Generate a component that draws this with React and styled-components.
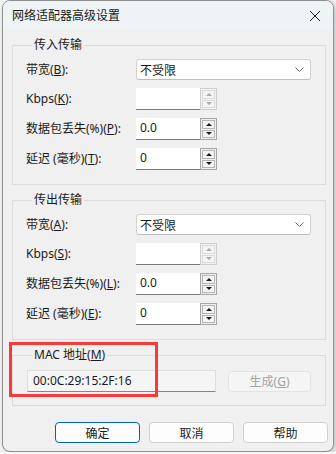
import React from 'react'
import styled, { createGlobalStyle } from 'styled-components'

const Global = createGlobalStyle`
    html, body {
        margin: 0;
        padding: 0;
        background: #f7f7f7;
    }
    body {
        font-family: "Noto Sans", "Noto Sans CJK SC", sans-serif;
        font-size: 12px;
        color: #1a1a1a;
    }
`

const Window = styled.div`
    width: 332px;
    height: 452px;
    margin-left: 2px;
    box-sizing: border-box;
    border: 1px solid #8f8f8f;
    border-radius: 8px;
    background: #f0f0f0;
    overflow: hidden;
    box-shadow: 2px 2px 6px rgba(0, 0, 0, 0.25);
    display: flex;
    flex-direction: column;
`

const TitleBar = styled.div`
    height: 29px;
    flex-shrink: 0;
    background: #eef4f6;
    display: flex;
    align-items: center;
    justify-content: space-between;
    padding: 0 9px 0 9px;
`

const Title = styled.span`
    font-size: 12px;
    line-height: 16px;
    color: #1a1a1a;
`

const Close = styled.div`
    width: 12px;
    height: 12px;
    display: flex;
    margin-right: 3px;
`

const Body = styled.div`
    flex: 1;
    display: flex;
    flex-direction: column;
    gap: 7px;
    padding: 7px 7px 0 9px;
`

const Group = styled.fieldset`
    margin: 0;
    border: 1px solid #dcdcdc;
    padding: ${p => p.$pt || 6}px 14px ${p => p.$pb || 14}px 13px;
    min-width: 0;
`

const Legend = styled.legend`
    padding: 0 2px;
    margin-left: 6px;
    height: 16px;
    line-height: 16px;
    font-size: 12px;
`

const Rows = styled.div`
    display: grid;
    grid-template-columns: 110px 1fr;
    row-gap: 8px;
    align-items: center;
`

const Label = styled.span`
    font-size: 12px;
    line-height: 16px;
    white-space: nowrap;
`

const Combo = styled.div`
    height: 21px;
    box-sizing: border-box;
    background: #fff;
    border: 1px solid #d2d2d2;
    border-bottom-color: #bdbdbd;
    border-radius: 3px;
    display: flex;
    align-items: center;
    justify-content: space-between;
    padding: 0 6px 0 3px;
    font-size: 12px;
`

const Spin = styled.div`
    display: flex;
    height: 22px;
`

const Field = styled.div`
    width: 64px;
    box-sizing: border-box;
    background: #fff;
    border-bottom: 1px solid #7a7a7a;
    padding: 1px 4px 0;
    font-size: 12px;
    line-height: 18px;
`

const SpinBox = styled.div`
    width: 17px;
    box-sizing: border-box;
    border: 1px solid ${p => (p.$disabled ? '#cfcfcf' : '#a5a5a5')};
    display: flex;
    flex-direction: column;
    padding: 1px;
    gap: 1px;
    background: #f0f0f0;
`

const SpinBtn = styled.div`
    flex: 1;
    border: 1px solid ${p => (p.$disabled ? '#dcdcdc' : '#b4b4b4')};
    background: #f4f4f4;
    display: flex;
    align-items: center;
    justify-content: center;
`

const Arrow = styled.div`
    width: 0;
    height: 0;
    border-left: 3px solid transparent;
    border-right: 3px solid transparent;
    ${p => (p.$down ? 'border-top' : 'border-bottom')}: 3px solid ${p => (p.$disabled ? '#a8a8a8' : '#1a1a1a')};
`

const MacWrap = styled.div`
    position: relative;
`

const MacRow = styled.div`
    display: flex;
    align-items: center;
    justify-content: space-between;
    padding-left: 1px;
`

const MacField = styled.div`
    width: 189px;
    height: 22px;
    box-sizing: border-box;
    background: #f5f5f5;
    border: 1px solid #dedede;
    border-bottom-color: #868686;
    padding: 0 5px;
    font-size: 12px;
    line-height: 20px;
`

const Button = styled.div`
    width: ${p => p.$w || 85}px;
    height: 21px;
    box-sizing: border-box;
    border-radius: 4px;
    border: 1px solid ${p => (p.$primary ? '#0063b1' : p.$disabled ? '#e3e3e3' : '#d0d0d0')};
    background: ${p => (p.$disabled ? '#f5f5f5' : '#fdfdfd')};
    color: ${p => (p.$disabled ? '#a2a2a2' : '#1a1a1a')};
    display: flex;
    align-items: center;
    justify-content: center;
    font-size: 12px;
`

const Highlight = styled.div`
    position: absolute;
    left: -3px;
    top: -5px;
    width: 149px;
    height: 55px;
    box-sizing: border-box;
    border: 3px solid #fa3a3a;
    pointer-events: none;
`

const Footer = styled.div`
    display: flex;
    justify-content: flex-end;
    gap: 9px;
    margin-top: 9px;
    margin-right: -2px;
`

const Key = ({ children }) => <u>{children}</u>

const Chevron = () => (
    <svg width="9" height="5" viewBox="0 0 9 5">
        <path d="M0.5 0.5 L4.5 4.5 L8.5 0.5" fill="none" stroke="#6b6b6b" strokeWidth="1" />
    </svg>
)

const SpinField = ({ value, disabled }) => (
    <Spin>
        <Field>{value}</Field>
        <SpinBox $disabled={disabled}>
            <SpinBtn $disabled={disabled}><Arrow $disabled={disabled} /></SpinBtn>
            <SpinBtn $disabled={disabled}><Arrow $down $disabled={disabled} /></SpinBtn>
        </SpinBox>
    </Spin>
)

const Transfer = ({ title, keys }) => (
    <Group>
        <Legend>{title}</Legend>
        <Rows>
            <Label>带宽(<Key>{keys[0]}</Key>):</Label>
            <Combo>不受限<Chevron /></Combo>
            <Label>Kbps(<Key>{keys[1]}</Key>):</Label>
            <SpinField value="" disabled />
            <Label>数据包丢失(%)(<Key>{keys[2]}</Key>):</Label>
            <SpinField value="0.0" />
            <Label>延迟 (毫秒)(<Key>{keys[3]}</Key>):</Label>
            <SpinField value="0" />
        </Rows>
    </Group>
)

const App = () => {
    return (
        <>
            <Global />
            <Window>
                <TitleBar>
                    <Title>网络适配器高级设置</Title>
                    <Close>
                        <svg width="12" height="12" viewBox="0 0 12 12">
                            <path d="M1 1 L11 11 M11 1 L1 11" stroke="#1a1a1a" strokeWidth="1" />
                        </svg>
                    </Close>
                </TitleBar>
                <Body>
                    <Transfer title="传入传输" keys={['B', 'K', 'P', 'T']} />
                    <Transfer title="传出传输" keys={['A', 'S', 'L', 'E']} />
                    <MacWrap>
                        <Group $pt={7} $pb={13}>
                            <Legend>MAC 地址(<Key>M</Key>)</Legend>
                            <MacRow>
                                <MacField>00:0C:29:15:2F:16</MacField>
                                <Button $w={83} $disabled>生成(<Key>G</Key>)</Button>
                            </MacRow>
                        </Group>
                        <Highlight />
                    </MacWrap>
                    <Footer>
                        <Button $primary>确定</Button>
                        <Button>取消</Button>
                        <Button>帮助</Button>
                    </Footer>
                </Body>
            </Window>
        </>
    )
}

export default App
